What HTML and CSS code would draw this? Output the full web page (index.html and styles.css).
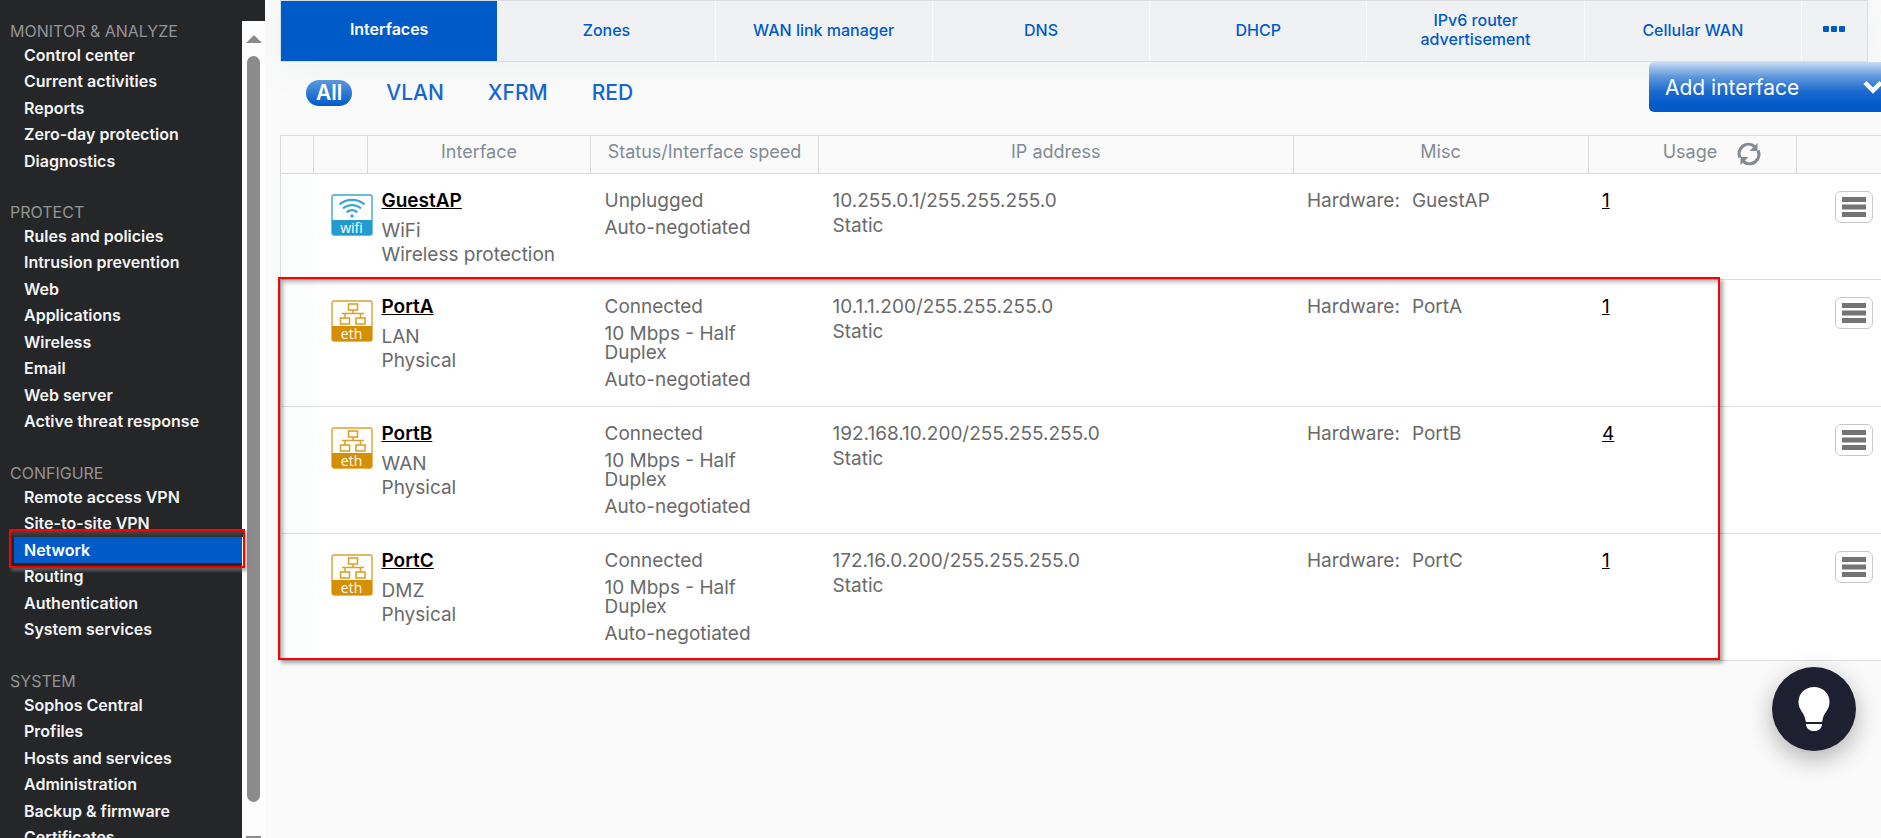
FILE: index.html
```html
<!DOCTYPE html>
<html lang="en">
<head>
<meta charset="utf-8">
<title>Network - Interfaces</title>
<link rel="stylesheet" href="styles.css">
</head>
<body>
<svg class="sprite" aria-hidden="true">
  <symbol id="icon-wifi" viewBox="0 0 42 42">
    <rect x="1" y="1" width="40" height="40" rx="2" fill="#fff" stroke="#3ba7d6" stroke-width="1.4"/>
    <path d="M1 26h40v13a2 2 0 0 1-2 2H3a2 2 0 0 1-2-2z" fill="#229ccf"/>
    <g fill="none" stroke="#3ba7d6" stroke-width="2.3">
      <path d="M8.500 10.500c7-6.300 18-6.300 25 0"/><path d="M12 14.500c5-4.600 13-4.600 18 0"/><path d="M15.800 18.300c3-2.800 7.400-2.800 10.400 0"/>
    </g>
    <circle cx="21" cy="22" r="1.700" fill="#3ba7d6"/>
  </symbol>
  <symbol id="icon-eth" viewBox="0 0 42 42">
    <rect x="1" y="1" width="40" height="40" rx="2" fill="#fff" stroke="#dda02c" stroke-width="1.4"/>
    <path d="M1 26h40v13a2 2 0 0 1-2 2H3a2 2 0 0 1-2-2z" fill="#d68f00"/>
    <g fill="none" stroke="#dda02c" stroke-width="1.600">
      <rect x="17.500" y="4" width="9" height="6"/><rect x="9.500" y="18" width="9" height="6"/><rect x="25" y="18" width="9" height="6"/>
      <path d="M22 10v3.500M11 13.500h22M14 13.500V18M29.500 13.500V18"/>
    </g>
  </symbol>
  <symbol id="icon-menu" viewBox="0 0 24 20">
    <path d="M0 0h24v5H0zM0 7.500h24v5H0zM0 15h24v5H0z" fill="#747474"/>
  </symbol>
</svg>
<div class="app">
  <aside class="sidebar">
    <nav class="nav">
      <h2 class="nav-title">MONITOR &amp; ANALYZE</h2>
      <ul class="nav-list">
        <li><a href="#">Control center</a></li>
        <li><a href="#">Current activities</a></li>
        <li><a href="#">Reports</a></li>
        <li><a href="#">Zero-day protection</a></li>
        <li><a href="#">Diagnostics</a></li>
      </ul>
      <h2 class="nav-title">PROTECT</h2>
      <ul class="nav-list">
        <li><a href="#">Rules and policies</a></li>
        <li><a href="#">Intrusion prevention</a></li>
        <li><a href="#">Web</a></li>
        <li><a href="#">Applications</a></li>
        <li><a href="#">Wireless</a></li>
        <li><a href="#">Email</a></li>
        <li><a href="#">Web server</a></li>
        <li><a href="#">Active threat response</a></li>
      </ul>
      <h2 class="nav-title">CONFIGURE</h2>
      <ul class="nav-list">
        <li><a href="#">Remote access VPN</a></li>
        <li><a href="#">Site-to-site VPN</a></li>
        <li class="current"><a href="#" aria-current="page">Network</a></li>
        <li><a href="#">Routing</a></li>
        <li><a href="#">Authentication</a></li>
        <li><a href="#">System services</a></li>
      </ul>
      <h2 class="nav-title">SYSTEM</h2>
      <ul class="nav-list">
        <li><a href="#">Sophos Central</a></li>
        <li><a href="#">Profiles</a></li>
        <li><a href="#">Hosts and services</a></li>
        <li><a href="#">Administration</a></li>
        <li><a href="#">Backup &amp; firmware</a></li>
        <li><a href="#">Certificates</a></li>
      </ul>
    </nav>
    <div class="scrollbar" aria-hidden="true">
      <span class="arrow-up"></span>
      <span class="thumb"></span>
      <span class="arrow-down"></span>
    </div>
  </aside>
  <main class="main">
    <nav class="tabs">
      <a class="tab active" href="#" aria-current="page">Interfaces</a>
      <a class="tab" href="#">Zones</a>
      <a class="tab" href="#">WAN link manager</a>
      <a class="tab" href="#">DNS</a>
      <a class="tab" href="#">DHCP</a>
      <a class="tab" href="#">IPv6 router advertisement</a>
      <a class="tab" href="#">Cellular WAN</a>
      <button class="tab-more" type="button" aria-label="More tabs"><svg width="22" height="6" viewBox="0 0 22 6"><path d="M1 0h4a1 1 0 0 1 1 1v4a1 1 0 0 1-1 1H1a1 1 0 0 1-1-1V1a1 1 0 0 1 1-1zM9 0h4a1 1 0 0 1 1 1v4a1 1 0 0 1-1 1H9a1 1 0 0 1-1-1V1a1 1 0 0 1 1-1zM17 0h4a1 1 0 0 1 1 1v4a1 1 0 0 1-1 1h-4a1 1 0 0 1-1-1V1a1 1 0 0 1 1-1z" fill="#005bc8"/></svg></button>
    </nav>
    <div class="toolbar">
      <div class="filters">
        <a class="filter selected" href="#">All</a>
        <a class="filter" href="#">VLAN</a>
        <a class="filter" href="#">XFRM</a>
        <a class="filter" href="#">RED</a>
      </div>
      <button class="add" type="button"><span>Add interface</span><svg width="20" height="14" viewBox="0 0 20 14"><path d="M2 2.500l8 8 8-8" fill="none" stroke="#fff" stroke-width="4.500"/></svg></button>
    </div>
    <div class="table-area">
      <table class="grid">
        <colgroup><col class="c-edge"><col class="c-icon"><col class="c-name"><col class="c-status"><col><col class="c-misc"><col class="c-usage"><col class="c-menu"></colgroup>
        <thead>
          <tr><th></th><th></th><th>Interface</th><th>Status/Interface speed</th><th>IP address</th><th>Misc</th>
            <th><span class="usage-head">Usage<svg width="24" height="24" viewBox="0 0 24 24"><g fill="none" stroke="#828b93" stroke-width="3.200"><path d="M3 15.500A9.300 9.300 0 0 1 17.500 4.500"/><path d="M21 8.500A9.300 9.300 0 0 1 6.500 19.500"/></g><path d="M20.500 1v8h-8zM3.500 23v-8h8z" fill="#828b93"/></svg></span></th><th></th></tr>
        </thead>
        <tbody>
          <tr><td></td><td class="icon"><span class="badge"><svg width="42" height="42"><use href="#icon-wifi"/></svg><span>wifi</span></span></td>
            <td class="name"><a href="#">GuestAP</a><div>WiFi</div><div>Wireless protection</div></td>
            <td class="status"><p>Unplugged</p><p>Auto-negotiated</p></td>
            <td class="ip">10.255.0.1/255.255.255.0<br>Static</td>
            <td class="misc"><span>Hardware:</span><span>GuestAP</span></td>
            <td class="usage"><a href="#">1</a></td>
            <td class="menu"><button type="button" aria-label="GuestAP menu"><svg width="24" height="20"><use href="#icon-menu"/></svg></button></td></tr>
          <tr><td></td><td class="icon"><span class="badge"><svg width="42" height="42"><use href="#icon-eth"/></svg><span>eth</span></span></td>
            <td class="name"><a href="#">PortA</a><div>LAN</div><div>Physical</div></td>
            <td class="status"><p>Connected</p><p>10 Mbps - Half Duplex</p><p>Auto-negotiated</p></td>
            <td class="ip">10.1.1.200/255.255.255.0<br>Static</td>
            <td class="misc"><span>Hardware:</span><span>PortA</span></td>
            <td class="usage"><a href="#">1</a></td>
            <td class="menu"><button type="button" aria-label="PortA menu"><svg width="24" height="20"><use href="#icon-menu"/></svg></button></td></tr>
          <tr><td></td><td class="icon"><span class="badge"><svg width="42" height="42"><use href="#icon-eth"/></svg><span>eth</span></span></td>
            <td class="name"><a href="#">PortB</a><div>WAN</div><div>Physical</div></td>
            <td class="status"><p>Connected</p><p>10 Mbps - Half Duplex</p><p>Auto-negotiated</p></td>
            <td class="ip">192.168.10.200/255.255.255.0<br>Static</td>
            <td class="misc"><span>Hardware:</span><span>PortB</span></td>
            <td class="usage"><a href="#">4</a></td>
            <td class="menu"><button type="button" aria-label="PortB menu"><svg width="24" height="20"><use href="#icon-menu"/></svg></button></td></tr>
          <tr><td></td><td class="icon"><span class="badge"><svg width="42" height="42"><use href="#icon-eth"/></svg><span>eth</span></span></td>
            <td class="name"><a href="#">PortC</a><div>DMZ</div><div>Physical</div></td>
            <td class="status"><p>Connected</p><p>10 Mbps - Half Duplex</p><p>Auto-negotiated</p></td>
            <td class="ip">172.16.0.200/255.255.255.0<br>Static</td>
            <td class="misc"><span>Hardware:</span><span>PortC</span></td>
            <td class="usage"><a href="#">1</a></td>
            <td class="menu"><button type="button" aria-label="PortC menu"><svg width="24" height="20"><use href="#icon-menu"/></svg></button></td></tr>
        </tbody>
      </table>
      <div class="highlight"></div>
    </div>
  </main>
</div>
<button class="help" type="button" aria-label="Tips"><svg width="32" height="46" viewBox="0 0 32 46"><path d="M16 1C7 1 .5 7.500.500 16c0 8.500 6.500 11 7 18.500q0 1.500 1.500 1.500h14q1.500 0 1.500-1.500C25 27 31.500 24.500 31.500 16 31.500 7.500 25 1 16 1z" fill="#fff"/><path d="M8.500 38h15c.5 0 .7.500.500 1-1 4-4 6-8 6s-7-2-8-6c-.2-.5 0-1 .5-1z" fill="#fff"/></svg></button>
</body>
</html>
```
FILE: styles.css
```css
* { box-sizing: border-box; }
body {
  margin: 0;
  background: #fafafa;
  font-family: Inter, "Liberation Sans", sans-serif;
  overflow: hidden;
}
a { color: inherit; text-decoration: none; }
button { font: inherit; cursor: pointer; }
.sprite { display: none; }
.app { display: flex; height: 100vh; overflow: hidden; }

/* Sidebar */
.sidebar { display: flex; flex: none; width: 265px; padding-top: 18px; background: #252628; position: relative; }
.nav { flex: 1; min-width: 0; overflow: visible; }
.nav-title { margin: 0; height: 24px; padding-left: 10px; font-size: 16px; line-height: 26px; font-weight: 400; color: #949494; }
.nav-list { margin: 0 0 25px; padding: 0; list-style: none; }
.nav-list li { position: relative; height: 26px; margin-left: 14px; padding-left: 10px; font-size: 16px; line-height: 27px; font-weight: 600; color: #f4f4f4; }
.nav-list li:nth-child(even) { height: 27px; }
.nav-list .current { background: #005bc8; color: #fff; }
.current a { position: relative; z-index: 1; }
.current::after {
  content: "";
  position: absolute;
  inset: -8px -3px -5px -5px;
  border: 2px solid #f00;
  background: linear-gradient(#454749, #2b2c2e 6px, transparent 6px);
  box-shadow: 2px 3px 3px rgba(120, 120, 120, 0.6);
}
.scrollbar { display: flex; flex-direction: column; align-items: center; width: 23px; margin-top: 3px; padding-top: 14px; background: #fdfdfd; }
.arrow-up { border: 8px solid transparent; border-top: 0; border-bottom-color: #8b8b8b; }
.thumb { flex: 1; width: 13px; margin: 13px 0 34px; border-radius: 7px; background: #8b8b8b; }
.arrow-down { width: 15px; height: 2px; background: #8b8b8b; }

/* Tabs */
.main { flex: 1; min-width: 0; padding-left: 15px; }
.tabs { display: flex; height: 62px; margin-right: 13px; border: 1px solid #dcdde0; background: #f0f1f3; box-shadow: 0 6px 36px rgba(120, 150, 140, 0.08); }
.tab { display: flex; flex: 1; align-items: center; justify-content: center; padding: 0 24px 2px; border-left: 1px solid #fafafa; font-size: 16px; line-height: 19px; font-weight: 500; color: #005bc8; text-align: center; }
.tab.active { border-left: 0; padding-bottom: 4px; background: #005bc8; font-weight: 600; color: #fff; }
.tab-more { display: flex; flex: none; align-items: center; justify-content: center; width: 66px; padding: 0 0 4px; border: 0; border-left: 1px solid #fafafa; background: none; }

/* Filters and add button */
.toolbar { display: flex; justify-content: space-between; align-items: flex-start; height: 73px; }
.filters { display: flex; gap: 24px; padding: 18px 0 0 26px; font-size: 21px; line-height: 26px; font-weight: 500; color: #1467cf; }
.filter { padding: 0 10px; border-radius: 13px; }
.filter.selected { background: linear-gradient(#5e98de, #005bc8); font-weight: 600; color: #fff; }
.add { display: flex; justify-content: space-between; align-items: center; width: 250px; height: 50px; margin-right: -18px; padding: 0 16px; border: 0; border-radius: 5px; background: linear-gradient(#cbdcf1, #5c97dc 30%, #1a69ce 60%, #005bc8 85%); font-size: 21px; color: #fff; position: relative; }

/* Interface table */
.table-area { position: relative; }
.grid { width: 100%; table-layout: fixed; border-collapse: collapse; border-top: 1px solid #d9dadd; border-left: 1px solid #d9dadd; font-size: 19px; color: #6a6a6a; }
.c-edge { width: 33px; }
.c-icon { width: 54px; }
.c-name { width: 223px; }
.c-status { width: 228px; }
.c-misc { width: 295px; }
.c-usage { width: 208px; }
.c-menu { width: 85px; }
.grid th { height: 38px; padding: 0; border-left: 1px solid #d9dadd; border-bottom: 1px solid #d9dadd; font-size: 18px; line-height: 32px; font-weight: 400; color: #828b93; vertical-align: top; }
.grid tbody tr { background: #fff; border-bottom: 1px solid #dcdcdc; }
.grid td { padding: 15px 0 9px 14px; vertical-align: top; line-height: 24px; }
.grid td:first-child { background: #fcfdfd; }
.usage-head { display: inline-flex; gap: 20px; align-items: center; padding-left: 40px; }
.usage-head svg { margin-top: 4px; }
.grid .icon { padding: 20px 0 0 17px; }
.badge { display: grid; width: 42px; }
.badge > * { grid-area: 1 / 1; }
.badge span { align-self: end; font-family: "Open Sans", sans-serif; font-size: 14px; line-height: 17px; font-weight: 400; text-align: center; color: #fff; }
.name a { display: block; margin-bottom: 6px; font-weight: 600; color: #000; text-decoration: underline; }
.name div:last-child { margin-bottom: 3px; }
.grid .status { padding-top: 17px; padding-right: 50px; line-height: 19px; }
.status p { margin: 0 0 8px; }
.grid .ip { padding-top: 14px; line-height: 25px; }
.misc span + span { margin-left: 12px; }
.usage a { color: #000; text-decoration: underline; }
.grid .menu { padding: 17px 0 0 39px; }
.menu button { display: flex; align-items: center; justify-content: center; width: 38px; height: 32px; padding: 0; border: 1px solid #c8c8c8; border-radius: 6px; background: #fff; }

/* Marks the port rows */
.highlight { position: absolute; left: -2px; right: 161px; top: 142px; bottom: 1px; border: 2px solid #f00; box-shadow: 3px 3px 4px rgba(0, 0, 0, 0.35), inset 3px 3px 4px rgba(0, 0, 0, 0.3); pointer-events: none; }

.help { position: fixed; right: 25px; bottom: 87px; display: flex; align-items: center; justify-content: center; width: 84px; height: 84px; padding: 0; border: 0; border-radius: 50%; background: #1e1f30; box-shadow: 0 8px 24px rgba(0, 0, 0, 0.3); }
```
